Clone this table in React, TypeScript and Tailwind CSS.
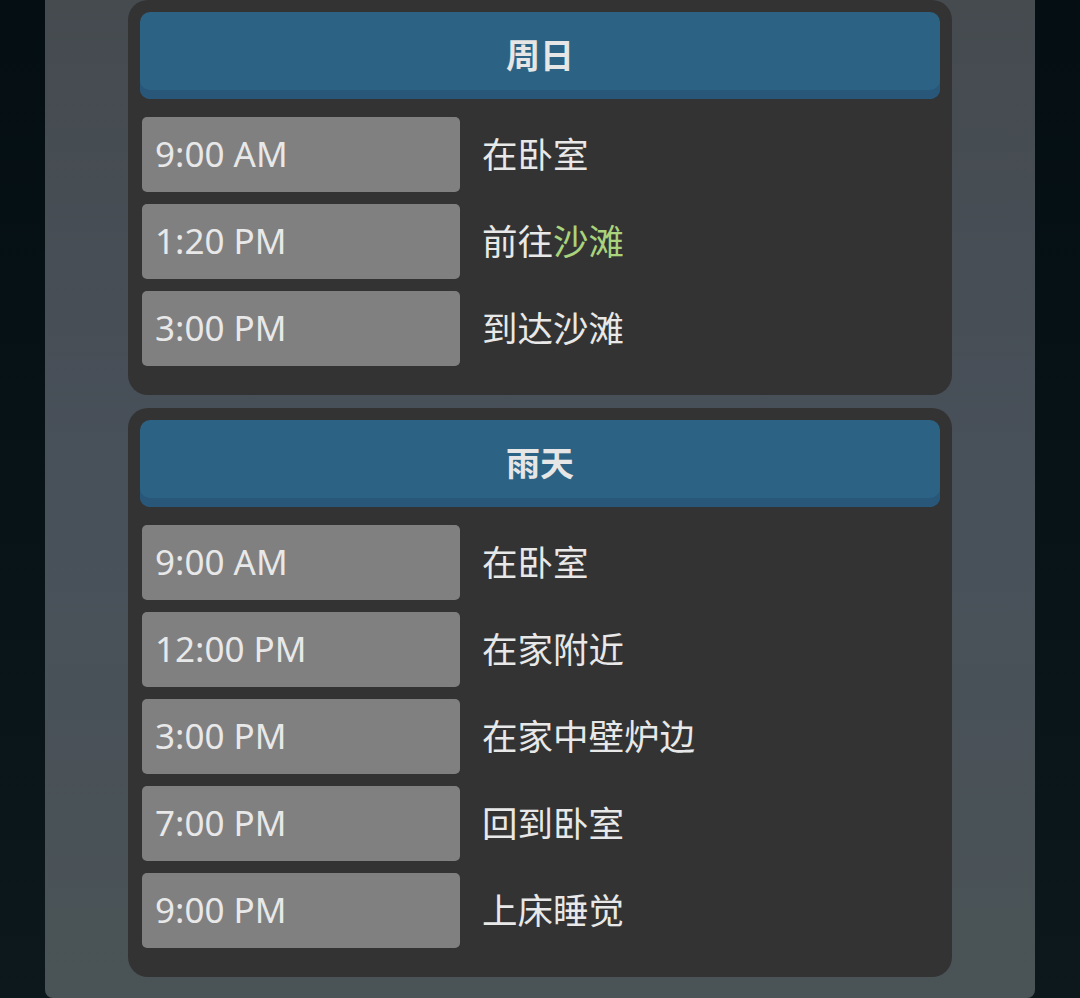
import React from "react";

// Schedule cards: blue header, grey time boxes, activity text to the right.

type Entry = { time: string; place: React.ReactNode };

const sunday: Entry[] = [
  { time: "9:00 AM", place: "在卧室" },
  {
    time: "1:20 PM",
    place: (
      <>
        前往<span className="text-[#a9d37c]">沙滩</span>
      </>
    ),
  },
  { time: "3:00 PM", place: "到达沙滩" },
];

const rainy: Entry[] = [
  { time: "9:00 AM", place: "在卧室" },
  { time: "12:00 PM", place: "在家附近" },
  { time: "3:00 PM", place: "在家中壁炉边" },
  { time: "7:00 PM", place: "回到卧室" },
  { time: "9:00 PM", place: "上床睡觉" },
];

const font = "font-['Noto_Sans','Noto_Sans_CJK_SC',sans-serif]";

function ScheduleCard({ title, entries }: { title: string; entries: Entry[] }) {
  return (
    <div className="w-[824px] rounded-[20px] bg-[#333333] px-[12px] pt-[12px] pb-[29px]">
      <div className="flex h-[87px] items-center justify-center rounded-[10px] bg-[#2c6384] shadow-[inset_0_-9px_0_#28577a]">
        <span className="text-[34px] font-bold text-[#e6e6e6]">{title}</span>
      </div>
      <div className="mt-[18px] flex flex-col gap-[12px] px-[2px]">
        {entries.map((e, i) => (
          <div key={i} className="flex items-center">
            <div className="flex h-[75px] w-[318px] shrink-0 items-center rounded-[5px] bg-[#808080] pl-[13px] text-[35px] text-[#e8e8e8]">
              {e.time}
            </div>
            <div className="ml-[22px] text-[35.5px] text-[#e8e8e8]">{e.place}</div>
          </div>
        ))}
      </div>
    </div>
  );
}

export default function App() {
  return (
    <div className={`min-h-[998px] bg-gradient-to-b from-[#040e13] to-[#0c181b] ${font}`}>
      <div className="mx-[45px] flex min-h-[998px] flex-col items-center gap-[13px] rounded-b-[8px] bg-gradient-to-b from-[#454b4f] via-[#48505a] to-[#4a5355] pb-[21px]">
        <ScheduleCard title="周日" entries={sunday} />
        <ScheduleCard title="雨天" entries={rainy} />
      </div>
    </div>
  );
}
